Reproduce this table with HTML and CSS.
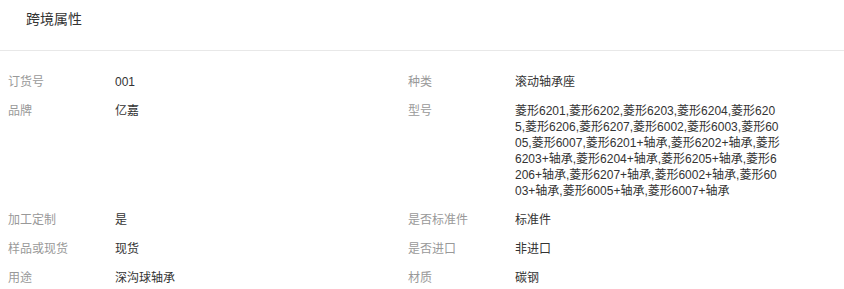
FILE: index.html
```html
<!DOCTYPE html>
<html lang="zh-CN">
<head>
<meta charset="utf-8">
<title>跨境属性</title>
<link rel="stylesheet" href="styles.css">
</head>
<body>
<div class="panel">
  <div class="panel-header">跨境属性</div>
  <div class="attrs">
    <div class="attr"><div class="attr-label">订货号</div><div class="attr-value">001</div></div>
    <div class="attr"><div class="attr-label">种类</div><div class="attr-value">滚动轴承座</div></div>
    <div class="attr"><div class="attr-label">品牌</div><div class="attr-value">亿嘉</div></div>
    <div class="attr"><div class="attr-label">型号</div><div class="attr-value">菱形6201,菱形6202,菱形6203,菱形6204,菱形6205,菱形6206,菱形6207,菱形6002,菱形6003,菱形6005,菱形6007,菱形6201+轴承,菱形6202+轴承,菱形6203+轴承,菱形6204+轴承,菱形6205+轴承,菱形6206+轴承,菱形6207+轴承,菱形6002+轴承,菱形6003+轴承,菱形6005+轴承,菱形6007+轴承</div></div>
    <div class="attr"><div class="attr-label">加工定制</div><div class="attr-value">是</div></div>
    <div class="attr"><div class="attr-label">是否标准件</div><div class="attr-value">标准件</div></div>
    <div class="attr"><div class="attr-label">样品或现货</div><div class="attr-value">现货</div></div>
    <div class="attr"><div class="attr-label">是否进口</div><div class="attr-value">非进口</div></div>
    <div class="attr"><div class="attr-label">用途</div><div class="attr-value">深沟球轴承</div></div>
    <div class="attr"><div class="attr-label">材质</div><div class="attr-value">碳钢</div></div>
  </div>
</div>
</body>
</html>
```

FILE: styles.css
```css
* { box-sizing: border-box; }
html, body {
  margin: 0;
  padding: 0;
  background: #fff;
}
body {
  font-family: "Liberation Sans", "Noto Sans CJK SC", sans-serif;
  color: #333;
}
.panel {
  width: 844px;
}
.panel-header {
  height: 51px;
  padding: 10px 0 0 26px;
  font-size: 14px;
  line-height: 18px;
  color: #333;
  border-bottom: 1px solid #e8e8e8;
}
.attrs {
  display: grid;
  grid-template-columns: 400px 400px;
  padding: 16px 0 0 8px;
}
.attr {
  display: grid;
  grid-template-columns: 107px 266px;
  align-items: start;
  padding: 7px 0 6px;
  font-size: 12px;
  line-height: 16px;
}
.attr-label {
  color: #999;
}
.attr-value {
  color: #333;
  word-break: break-all;
}
```
